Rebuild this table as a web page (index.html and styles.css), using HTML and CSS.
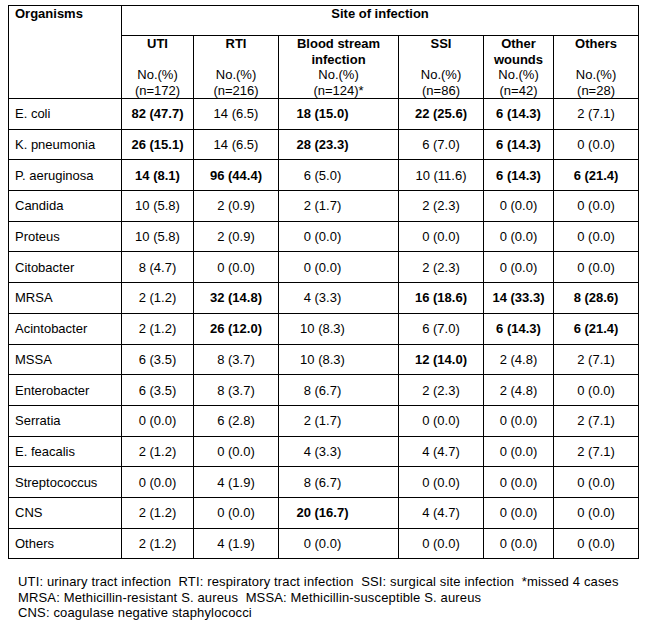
FILE: index.html
```html
<!DOCTYPE html>
<html>
<head>
<meta charset="utf-8">
<link rel="stylesheet" href="styles.css">
</head>
<body>
<div class="page">
<table class="tbl">
  <colgroup>
    <col class="c-org"><col class="c-uti"><col class="c-rti"><col class="c-bsi"><col class="c-ssi"><col class="c-ow"><col class="c-oth">
  </colgroup>
  <thead>
    <tr class="h1">
      <th rowspan="2" class="org-h">Organisms</th>
      <th colspan="6" class="site">Site of infection</th>
    </tr>
    <tr class="h2">
      <th><b>UTI</b><br><br>No.(%)<br>(n=172)</th>
      <th><b>RTI</b><br><br>No.(%)<br>(n=216)</th>
      <th><b>Blood stream<br>infection</b><br>No.(%)<br>(n=124)*</th>
      <th><b>SSI</b><br><br>No.(%)<br>(n=86)</th>
      <th><b>Other<br>wounds</b><br>No.(%)<br>(n=42)</th>
      <th><b>Others</b><br><br>No.(%)<br>(n=28)</th>
    </tr>
  </thead>
  <tbody>
    <tr><td class="name">E. coli</td><td class="b">82 (47.7)</td><td>14 (6.5)</td><td class="bsi b">18 (15.0)</td><td class="b">22 (25.6)</td><td class="b">6 (14.3)</td><td>2 (7.1)</td></tr>
    <tr><td class="name">K. pneumonia</td><td class="b">26 (15.1)</td><td>14 (6.5)</td><td class="bsi b">28 (23.3)</td><td>6 (7.0)</td><td class="b">6 (14.3)</td><td>0 (0.0)</td></tr>
    <tr><td class="name">P. aeruginosa</td><td class="b">14 (8.1)</td><td class="b">96 (44.4)</td><td class="bsi">6 (5.0)</td><td>10 (11.6)</td><td class="b">6 (14.3)</td><td class="b">6 (21.4)</td></tr>
    <tr><td class="name">Candida</td><td>10 (5.8)</td><td>2 (0.9)</td><td class="bsi">2 (1.7)</td><td>2 (2.3)</td><td>0 (0.0)</td><td>0 (0.0)</td></tr>
    <tr><td class="name">Proteus</td><td>10 (5.8)</td><td>2 (0.9)</td><td class="bsi">0 (0.0)</td><td>0 (0.0)</td><td>0 (0.0)</td><td>0 (0.0)</td></tr>
    <tr><td class="name">Citobacter</td><td>8 (4.7)</td><td>0 (0.0)</td><td class="bsi">0 (0.0)</td><td>2 (2.3)</td><td>0 (0.0)</td><td>0 (0.0)</td></tr>
    <tr><td class="name">MRSA</td><td>2 (1.2)</td><td class="b">32 (14.8)</td><td class="bsi">4 (3.3)</td><td class="b">16 (18.6)</td><td class="b">14 (33.3)</td><td class="b">8 (28.6)</td></tr>
    <tr><td class="name">Acintobacter</td><td>2 (1.2)</td><td class="b">26 (12.0)</td><td class="bsi">10 (8.3)</td><td>6 (7.0)</td><td class="b">6 (14.3)</td><td class="b">6 (21.4)</td></tr>
    <tr><td class="name">MSSA</td><td>6 (3.5)</td><td>8 (3.7)</td><td class="bsi">10 (8.3)</td><td class="b">12 (14.0)</td><td>2 (4.8)</td><td>2 (7.1)</td></tr>
    <tr><td class="name">Enterobacter</td><td>6 (3.5)</td><td>8 (3.7)</td><td class="bsi">8 (6.7)</td><td>2 (2.3)</td><td>2 (4.8)</td><td>0 (0.0)</td></tr>
    <tr><td class="name">Serratia</td><td>0 (0.0)</td><td>6 (2.8)</td><td class="bsi">2 (1.7)</td><td>0 (0.0)</td><td>0 (0.0)</td><td>2 (7.1)</td></tr>
    <tr><td class="name">E. feacalis</td><td>2 (1.2)</td><td>0 (0.0)</td><td class="bsi">4 (3.3)</td><td>4 (4.7)</td><td>0 (0.0)</td><td>2 (7.1)</td></tr>
    <tr><td class="name">Streptococcus</td><td>0 (0.0)</td><td>4 (1.9)</td><td class="bsi">8 (6.7)</td><td>0 (0.0)</td><td>0 (0.0)</td><td>0 (0.0)</td></tr>
    <tr><td class="name">CNS</td><td>2 (1.2)</td><td>0 (0.0)</td><td class="bsi b">20 (16.7)</td><td>4 (4.7)</td><td>0 (0.0)</td><td>0 (0.0)</td></tr>
    <tr><td class="name">Others</td><td>2 (1.2)</td><td>4 (1.9)</td><td class="bsi">0 (0.0)</td><td>0 (0.0)</td><td>0 (0.0)</td><td>0 (0.0)</td></tr>
  </tbody>
</table>
<div class="notes">
<div class="note">UTI: urinary tract infection  RTI: respiratory tract infection  SSI: surgical site infection  *missed 4 cases</div>
<div class="note">MRSA: Methicillin-resistant S. aureus  MSSA: Methicillin-susceptible S. aureus</div>
<div class="note">CNS: coagulase negative staphylococci</div>
</div>
</div>
</body>
</html>
```

FILE: styles.css
```css
html, body {
  margin: 0;
  padding: 0;
  background: #fff;
}
.page {
  padding: 5px 8px 0 8px;
  font-family: "Liberation Sans", Arial, sans-serif;
  font-size: 13px;
  color: #000;
}
.tbl {
  border-collapse: collapse;
  table-layout: fixed;
  width: 630px;
}
.c-org { width: 113px; }
.c-uti { width: 72px; }
.c-rti { width: 85px; }
.c-bsi { width: 120px; }
.c-ssi { width: 85px; }
.c-ow { width: 70px; }
.c-oth { width: 85px; }
.tbl th, .tbl td {
  border: 1px solid #000;
  padding: 0;
}
.tbl th {
  font-weight: normal;
  vertical-align: top;
  text-align: center;
  line-height: 15.5px;
}
.tbl th b { font-weight: bold; }
.h1 th { height: 29px; padding-top: 0; }
.org-h {
  text-align: left !important;
  font-weight: bold !important;
  padding-left: 6px !important;
}
.site { font-weight: bold !important; }
.h2 th { height: 62px; padding-top: 0; }
.tbl td {
  height: 29.7px;
  text-align: center;
  vertical-align: middle;
  line-height: 15px;
}
.tbl td.name {
  text-align: left;
  padding-left: 6px;
}
.tbl td.bsi { padding-right: 32px; }
.tbl td.b { font-weight: bold; }
.notes {
  margin-top: 15px;
  padding-left: 10px;
  line-height: 15.5px;
  letter-spacing: 0.15px;
}
.note { white-space: pre; }
```
